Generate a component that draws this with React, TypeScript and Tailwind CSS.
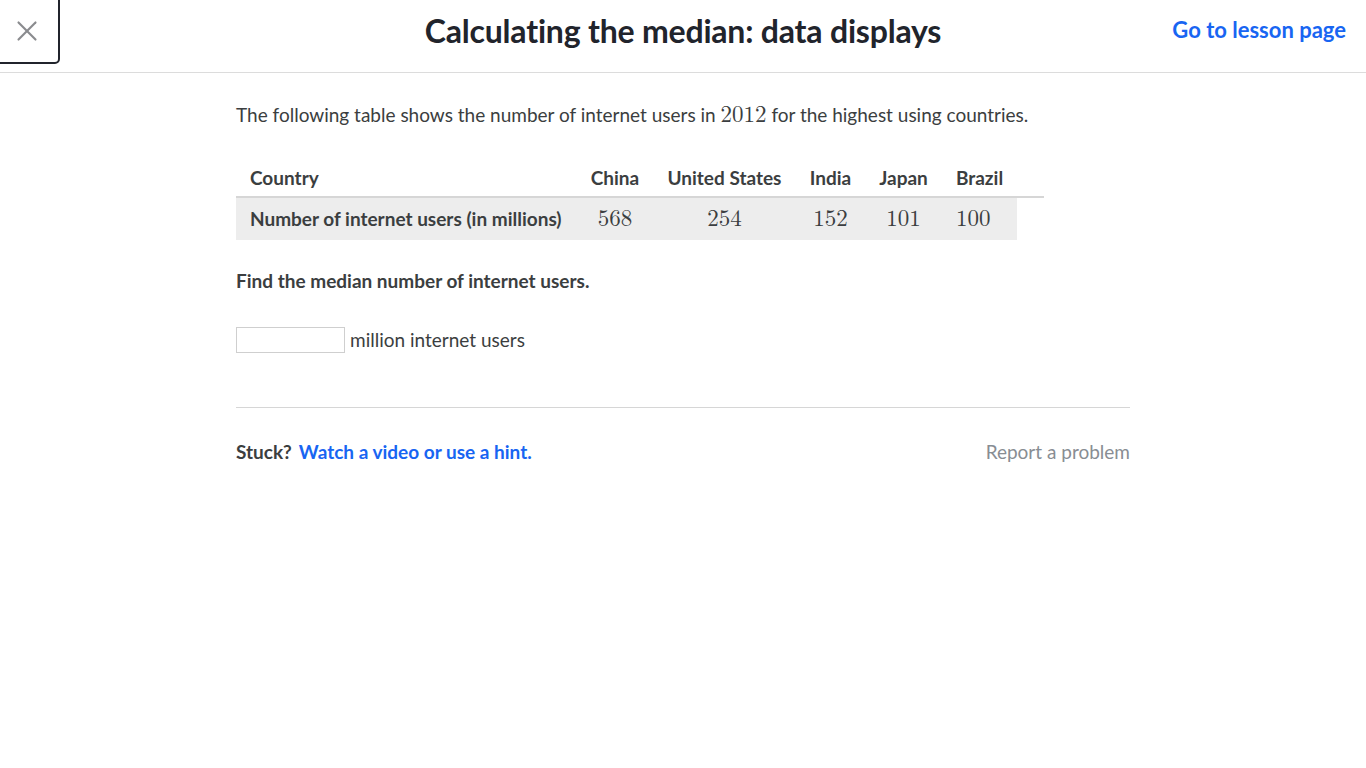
import { X } from "lucide-react";

const cols = [
  { name: "China", value: "568", w: "w-[76px]", align: "text-center" },
  { name: "United States", value: "254", w: "w-[143px]", align: "text-center" },
  { name: "India", value: "152", w: "w-[69px]", align: "text-center" },
  { name: "Japan", value: "101", w: "w-[77px]", align: "text-center" },
  { name: "Brazil", value: "100", w: "w-[75px]", align: "text-left pl-[14px]" },
];

const mathFont = "font-['Latin_Modern_Math','Liberation_Serif',serif]";

export default function App() {
  return (
    <div className="min-h-screen bg-white font-['Lato','Noto_Sans',sans-serif] text-[#21242c]">
      <header className="relative flex h-[73px] items-center justify-center border-b border-[#dcdcdc] pb-[10px]">
        <button className="absolute left-[-6px] top-[-4px] flex h-[68px] w-[66px] items-center justify-center rounded-br-[5px] border-2 border-[#21242c] pt-[2px] text-[#8a8b8e]">
          <X className="h-[34px] w-[34px]" strokeWidth={1.5} />
        </button>
        <h1 className="text-[32px] font-bold leading-none tracking-[-0.2px]">
          Calculating the median: data displays
        </h1>
        <a className="absolute right-5 top-[16px] text-[22px] font-bold leading-[28px] text-[#1865f2]">
          Go to lesson page
        </a>
      </header>

      <main className="ml-[236px] w-[894px] pt-[28px]">
        <p className="text-[19px] leading-[28px] text-[#3b3e40]">
          The following table shows the number of internet users in{" "}
          <span className={`${mathFont} text-[23px] leading-none`}>2012</span> for the highest using countries.
        </p>

        <div className="mt-[31px] text-[19px] text-[#3b3e40]">
          <div className="flex h-[38px] w-[808px] items-center border-b-2 border-[#d6d6d6] font-bold">
            <div className="w-[341px] px-[14px]">Country</div>
            {cols.map((c) => (
              <div key={c.name} className={`${c.w} text-center`}>
                {c.name}
              </div>
            ))}
          </div>
          <div className="flex h-[42px] w-[781px] items-center bg-[#ededed]">
            <div className="w-[341px] px-[14px] font-bold">Number of internet users (in millions)</div>
            {cols.map((c) => (
              <div key={c.name} className={`${c.w} ${c.align} ${mathFont} text-[23px]`}>
                {c.value}
              </div>
            ))}
          </div>
        </div>

        <p className="mt-[27px] text-[19px] font-bold leading-[28px] text-[#3b3e40]">
          Find the median number of internet users.
        </p>

        <div className="mt-[31px] flex h-[28px] items-center gap-[5px] text-[19px] leading-[28px] text-[#3b3e40]">
          <input className="h-[26px] w-[109px] border border-[#cfcfcf] bg-white" />
          <span>million internet users</span>
        </div>

        <div className="mt-[53px] border-t border-[#d6d6d6]" />

        <div className="mt-[30px] flex items-center justify-between text-[19px] leading-[28px]">
          <div className="flex items-center gap-[7px] font-bold">
            <span className="text-[#3b3e40]">Stuck?</span>
            <a className="text-[#1865f2]">Watch a video or use a hint.</a>
          </div>
          <a className="text-[#888d93]">Report a problem</a>
        </div>
      </main>
    </div>
  );
}
